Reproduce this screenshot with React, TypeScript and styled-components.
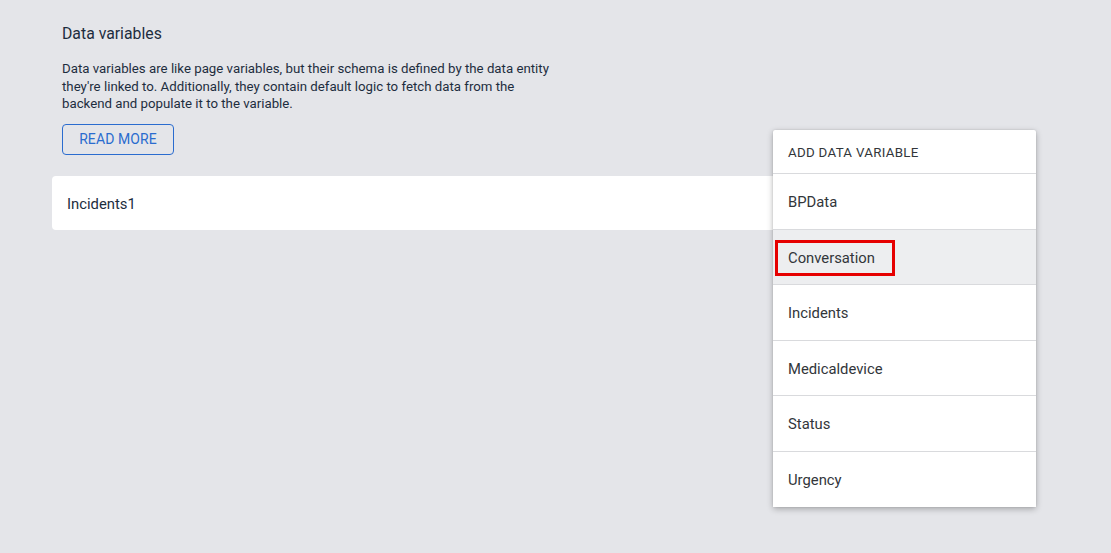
import React from "react";
import styled, { createGlobalStyle } from "styled-components";

const Global = createGlobalStyle`
  html, body { margin: 0; padding: 0; background: #e4e5e9; }
  body { font-family: Roboto, "Noto Sans", Arial, sans-serif; color: #1d2d3e; }
  * { box-sizing: border-box; }
`;

const Page = styled.div`
  position: relative;
  width: 1111px;
  height: 553px;
  padding: 23px 81px 0 52px;
  overflow: hidden;
`;

const Intro = styled.section`
  display: flex;
  flex-direction: column;
  align-items: flex-start;
  padding-left: 10px;
`;

const Title = styled.h2`
  margin: 0;
  font-size: 15.8px;
  font-weight: 400;
  line-height: 22px;
  color: #1d2d3e;
`;

const Description = styled.p`
  margin: 15px 0 0;
  width: 500px;
  font-size: 13.25px;
  line-height: 17.6px;
  color: #1d2d3e;
`;

const OutlineButton = styled.button`
  margin-top: 11px;
  width: 112px;
  height: 31px;
  border: 1px solid #2a6ccf;
  border-radius: 4px;
  background: transparent;
  color: #2a6ccf;
  font-family: inherit;
  font-size: 14px;
  letter-spacing: 0.1px;
  padding: 0;
  cursor: pointer;
`;

const VariableCard = styled.div`
  margin-top: 21px;
  height: 54px;
  background: #ffffff;
  border-radius: 4px;
  display: flex;
  align-items: center;
  padding: 2px 0 0 15px;
  font-size: 14.8px;
  color: #1d2d3e;
`;

const Menu = styled.ul`
  position: absolute;
  left: 773px;
  top: 130px;
  width: 263px;
  margin: 0;
  padding: 0;
  list-style: none;
  background: #ffffff;
  border-radius: 2px;
  box-shadow: 0 2px 6px rgba(0, 0, 0, 0.28), 0 0 2px rgba(0, 0, 0, 0.12);
`;

const MenuHeader = styled.li`
  height: 44px;
  display: flex;
  align-items: center;
  padding: 1px 0 0 15px;
  font-size: 13.3px;
  letter-spacing: 0.3px;
  color: #32363a;
  border-bottom: 1px solid #d9dadd;
`;

const MenuItem = styled.li<{ $active?: boolean; $last?: boolean }>`
  position: relative;
  height: 55.5px;
  display: flex;
  align-items: center;
  padding: 2px 0 0 15px;
  font-size: 14.8px;
  color: #32363a;
  background: ${(p) => (p.$active ? "#edeef0" : "#ffffff")};
  border-bottom: ${(p) => (p.$last ? "none" : "1px solid #d9dadd")};
`;

const Highlight = styled.span`
  position: absolute;
  left: 2px;
  top: 10px;
  width: 120px;
  height: 36px;
  border: 3px solid #e60000;
  pointer-events: none;
`;

const items = ["BPData", "Conversation", "Incidents", "Medicaldevice", "Status", "Urgency"];

export default function App() {
  return (
    <>
      <Global />
      <Page>
        <Intro>
          <Title>Data variables</Title>
          <Description>
            Data variables are like page variables, but their schema is defined by the data entity
            they're linked to. Additionally, they contain default logic to fetch data from the
            backend and populate it to the variable.
          </Description>
          <OutlineButton>READ MORE</OutlineButton>
        </Intro>
        <VariableCard>Incidents1</VariableCard>
        <Menu>
          <MenuHeader>ADD DATA VARIABLE</MenuHeader>
          {items.map((it, i) => (
            <MenuItem key={it} $active={it === "Conversation"} $last={i === items.length - 1}>
              {it}
              {it === "Conversation" && <Highlight />}
            </MenuItem>
          ))}
        </Menu>
      </Page>
    </>
  );
}
